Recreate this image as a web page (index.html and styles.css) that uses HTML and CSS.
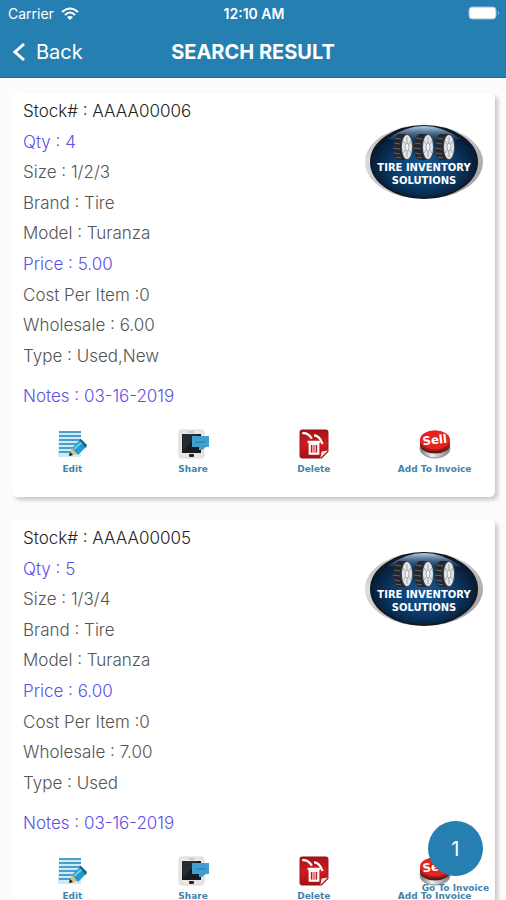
FILE: index.html
```html
<!DOCTYPE html>
<html lang="en">
<head>
<meta charset="utf-8">
<meta name="viewport" content="width=device-width, initial-scale=1">
<title>Search Result</title>
<link rel="stylesheet" href="styles.css">
</head>
<body>
<svg class="defs" width="0" height="0" aria-hidden="true">
  <defs>
    <linearGradient id="rim" x1="0" y1="0" x2="1" y2="1"><stop offset="0" stop-color="#999"/><stop offset=".25" stop-color="#ddd"/><stop offset=".6" stop-color="#bbb"/><stop offset="1" stop-color="#999"/></linearGradient>
    <radialGradient id="navy" cx=".5" cy=".55" r=".55"><stop offset="0" stop-color="#155a96"/><stop offset=".55" stop-color="#0b3a68"/><stop offset="1" stop-color="#06152a"/></radialGradient>
    <linearGradient id="shine" x1="0" y1="0" x2="0" y2="1"><stop offset="0" stop-color="#b9d2ea"/><stop offset="1" stop-color="#2a6095" stop-opacity="0"/></linearGradient>
    <linearGradient id="red" x1="0" y1="0" x2="0" y2="1"><stop offset="0" stop-color="#a3141a"/><stop offset=".5" stop-color="#cf1c20"/><stop offset="1" stop-color="#a90f14"/></linearGradient>
    <linearGradient id="steel" x1="0" y1="0" x2="1" y2="0"><stop offset="0" stop-color="#777"/><stop offset=".4" stop-color="#eee"/><stop offset="1" stop-color="#777"/></linearGradient>
    <g id="tire">
      <path d="M5 0h9v26H5Q0 23 0 13T5 0z" fill="#24282e"/>
      <path d="M2 4l6 1M1 9l6 1M0 14l7 1M1 19l6 1M3 23l5 1" stroke="#666" stroke-width="1"/>
      <ellipse cx="14" cy="13" rx="6" ry="13" fill="#4a4f55"/>
      <ellipse cx="14" cy="13" rx="5" ry="12" fill="#e4e8ea"/>
      <path d="M14 3v7M14 16v7M10 7l3 4M18 7l-3 4M10 19l3-4M18 19l-3-4" stroke="#9da5ac" stroke-width="1"/>
      <ellipse cx="14" cy="13" rx="2" ry="4" fill="#f2f4f5" stroke="#a0a8ae"/>
    </g>
    <symbol id="logo" viewBox="0 0 120 76">
      <ellipse cx="60" cy="38" rx="59" ry="37" fill="url(#rim)"/>
      <ellipse cx="60" cy="38" rx="53" ry="36" fill="url(#navy)" stroke="#111922" stroke-width="2"/>
      <path d="M23 15Q60-11 97 15Q60 23 23 15Z" fill="url(#shine)"/>
      <use href="#tire" x="29" y="10"/><use href="#tire" x="50" y="10"/><use href="#tire" x="71" y="10"/>
      <text class="logo-text" x="60" y="47" text-anchor="middle">TIRE INVENTORY</text>
      <text class="logo-text" x="60" y="60" text-anchor="middle">SOLUTIONS</text>
    </symbol>
    <symbol id="edit" viewBox="0 0 30 30">
      <path d="M2 2h22v26H1z" fill="#c9ebfb"/>
      <path d="M2 3h22M2 7h22M2 11h22M2 15h19M2 19h16M2 23h12" stroke="#2885b4" stroke-width="1.500"/>
      <path d="M12 27l3-8 6 6z" fill="#e8bd75"/><path d="M12 27l1-4 3 3z" fill="#151515"/>
      <path d="M15 19l8-8 6 7-8 8z" fill="#239bd0"/><path d="M17 20l8-7" stroke="#72cdf0" stroke-width="2"/>
      <path d="M22 11l2-1 6 6-1 3z" fill="#17617f"/>
    </symbol>
    <symbol id="share" viewBox="0 0 32 30">
      <rect x="2" y="1" width="25" height="28" rx="3" fill="#e8e6e4" stroke="#dcdad8"/>
      <rect x="5" y="5" width="19" height="19" fill="#181b1f"/><path d="M5 5h16L6 22z" fill="#272c31"/>
      <path d="M12 3h5" stroke="#aaa"/><rect x="12" y="25" width="5" height="3" rx="1" fill="#222"/>
      <path d="M15 7h17v11h-3l-4 3h-3v-3h-7z" fill="#409fce"/><path d="M19 13h10" stroke="#2d81ad" stroke-width="2" stroke-dasharray="2 1"/>
    </symbol>
    <symbol id="delete" viewBox="0 0 28 28">
      <path d="M3 1h22q2 0 2 2v18l-6 6H3q-2 0-2-2V3q0-2 2-2z" fill="url(#red)" stroke="#921418"/>
      <path d="M20 27l1-6 6-1z" fill="#f7e8e5"/>
      <path d="M3 4q5-1 9 5M14 6q5 0 8 8" fill="none" stroke="#fff" stroke-width="2"/>
      <path d="M8 12h12M10 14v9h8v-9z" fill="none" stroke="#fff" stroke-width="2"/><path d="M13 15v7M15 15v7" stroke="#fff"/>
    </symbol>
    <symbol id="sell" viewBox="0 0 30 28">
      <ellipse cx="15" cy="18" rx="14" ry="9" fill="url(#steel)" stroke="#999"/>
      <ellipse cx="15" cy="15" rx="14" ry="8" fill="#4a2020"/>
      <path d="M1 9v5c2 9 26 9 28 0V9z" fill="#b31212"/>
      <ellipse cx="15" cy="10" rx="14" ry="9" fill="#e52420"/>
      <text class="sell-text" x="15" y="14" text-anchor="middle" transform="rotate(-6 15 12)">Sell</text>
    </symbol>
  </defs>
</svg>
<div class="app">
  <header class="header">
    <div class="status">
      <span class="carrier">Carrier
        <svg width="18" height="13" viewBox="0 0 18 13" fill="none" stroke="#fff" stroke-width="2"><path d="M1 5q8-7 16 0M4 8q5-5 10 0"/><path d="M6 10q3-2 6 0l-3 3z" fill="#fff" stroke="none"/></svg>
      </span>
      <time>12:10 AM</time>
      <svg class="battery" width="32" height="14" viewBox="0 0 32 14"><rect x="1" y="1" width="27" height="12" rx="3" fill="#fff" stroke="#8fc0dc"/><path d="M30 5q2 2 0 4z" fill="#8fc0dc"/></svg>
    </div>
    <nav class="nav">
      <button class="back" type="button"><svg width="14" height="20" viewBox="0 0 14 20"><path d="M12 2L3 10l9 8" fill="none" stroke="#fff" stroke-width="3"/></svg>Back</button>
      <h1>SEARCH RESULT</h1>
    </nav>
  </header>
  <main class="results">
    <article class="card">
      <div class="summary">
        <ul class="details">
          <li class="stock">Stock# : AAAA00006</li><li class="accent">Qty : 4</li><li>Size : 1/2/3</li><li>Brand : Tire</li><li>Model : Turanza</li><li class="accent">Price : 5.00</li><li>Cost Per Item :0</li><li>Wholesale : 6.00</li><li>Type : Used,New</li>
        </ul>
        <svg class="logo"><use href="#logo"/></svg>
      </div>
      <p class="notes accent">Notes : 03-16-2019</p>
      <div class="actions">
        <button type="button"><svg><use href="#edit"/></svg>Edit</button>
        <button type="button"><svg><use href="#share"/></svg>Share</button>
        <button type="button"><svg><use href="#delete"/></svg>Delete</button>
        <button type="button"><svg><use href="#sell"/></svg>Add To Invoice</button>
      </div>
    </article>
    <article class="card">
      <div class="summary">
        <ul class="details">
          <li class="stock">Stock# : AAAA00005</li><li class="accent">Qty : 5</li><li>Size : 1/3/4</li><li>Brand : Tire</li><li>Model : Turanza</li><li class="accent">Price : 6.00</li><li>Cost Per Item :0</li><li>Wholesale : 7.00</li><li>Type : Used</li>
        </ul>
        <svg class="logo"><use href="#logo"/></svg>
      </div>
      <p class="notes accent">Notes : 03-16-2019</p>
      <div class="actions">
        <button type="button"><svg><use href="#edit"/></svg>Edit</button>
        <button type="button"><svg><use href="#share"/></svg>Share</button>
        <button type="button"><svg><use href="#delete"/></svg>Delete</button>
        <button type="button"><svg><use href="#sell"/></svg>Add To Invoice</button>
      </div>
    </article>
  </main>
  <button class="invoice" type="button"><span class="count">1</span><span>Go To Invoice</span></button>
</div>
</body>
</html>
```
FILE: styles.css
```css
* { box-sizing: border-box; }
body { margin: 0; background: #fcfcfc; font-family: Inter, "Liberation Sans", sans-serif; }
button { padding: 0; border: 0; background: none; color: inherit; font: inherit; cursor: pointer; }
.defs { position: absolute; }
.app { position: relative; display: flex; flex-direction: column; height: 100vh; overflow: hidden; }
.header { flex: none; background: #267fb1; color: #fff; border-bottom: 1px solid #1b6f9c; }
.status { display: grid; grid-template-columns: 1fr auto 1fr; align-items: center; height: 26px; padding: 0 6px 0 8px; font-size: 14px; }
.status time { font-weight: 600; }
.carrier { display: flex; align-items: center; gap: 7px; }
.battery { justify-self: end; }
.nav { display: grid; grid-template-columns: 1fr auto 1fr; align-items: center; height: 51px; padding: 0 12px; }
.back { display: flex; align-items: center; gap: 10px; font-size: 20px; }
.nav h1 { margin: 0; font-size: 20px; font-weight: 700; }
.results { flex: 1; overflow-y: auto; scrollbar-width: none; display: flex; flex-direction: column; gap: 23px; padding: 15px 11px 15px 12px; }
.card { flex: none; padding: 3px 0 21px; border-radius: 5px; background: #fff; box-shadow: 3px 3px 4px #c8c8c8; }
.summary { display: flex; justify-content: space-between; padding: 0 11px; }
.details { display: grid; grid-auto-rows: 1fr; min-height: 275px; margin: 0; padding: 0; list-style: none; }
.details li, .notes { display: flex; align-items: center; color: #555; font-size: 17px; font-weight: 300; }
.details .stock { color: #222; }
.details .accent, .accent.notes { color: #5b50e8; }
.logo { width: 120px; height: 76px; margin-top: 28px; }
.logo-text { fill: #fff; font: bold 10px "DejaVu Sans", sans-serif; }
.notes { height: 30px; margin: 10px 11px 18px; }
.actions { display: grid; grid-template-columns: repeat(4, 1fr); }
.actions button { display: flex; flex-direction: column; align-items: center; gap: 3px; line-height: 14px; }
.actions svg { width: 32px; height: 30px; }
.actions button, .invoice { color: #4583aa; font-family: "DejaVu Sans", sans-serif; font-size: 9px; font-weight: bold; white-space: nowrap; }
.sell-text { fill: #fff; font: bold 11px "DejaVu Sans", sans-serif; }
.invoice { position: absolute; right: 17px; bottom: 5px; display: flex; flex-direction: column; align-items: center; gap: 5px; line-height: 14px; }
.count { display: grid; place-items: center; width: 55px; height: 55px; border-radius: 50%; background: #267fb1; color: #fff; font: 20px Inter, "Liberation Sans", sans-serif; }
```
